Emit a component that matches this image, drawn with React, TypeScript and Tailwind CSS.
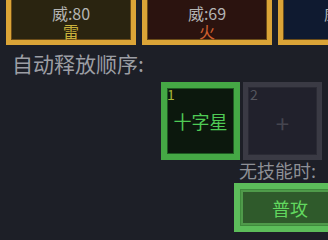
import React from "react";

const font = { fontFamily: '"Noto Sans CJK SC", "Noto Sans", sans-serif' };

function Card({ power, label, bg, labelColor }: { power: string; label: string; bg: string; labelColor: string }) {
  return (
    <div className={`w-[130px] h-[61px] shrink-0 border-[5px] border-[#dba437] ${bg} shadow-[inset_0_0_0_1px_#6b4c18] flex flex-col items-center pt-[15px]`}>
      <div className="text-[16px] leading-[19px] text-[#b4b4b4] whitespace-nowrap">{power}</div>
      <div className={`text-[16px] leading-[17px] ${labelColor}`}>{label}</div>
    </div>
  );
}

export default function App() {
  return (
    <div className="w-[328px] h-[240px] overflow-hidden bg-[#1d1f27] relative" style={font}>
      <div className="flex gap-[6px] ml-[6px] mt-[-16px]">
        <Card power="威:80" label="雷" bg="bg-[#2a2410]" labelColor="text-[#c9b23c]" />
        <Card power="威:69" label="火" bg="bg-[#2b130f]" labelColor="text-[#d0602e]" />
        <Card power="威:80" label="水" bg="bg-[#0f1a30]" labelColor="text-[#4a8ad0]" />
      </div>
      <div className="ml-[12px] mt-[4px] text-[21px] leading-[28px] text-[#9c9ea4]">自动释放顺序:</div>
      <div className="flex gap-[3px] ml-[161px] mt-[5px]">
        <div className="relative w-[79px] h-[78px] border-[6px] border-[#45a845] bg-[#0c180d] shadow-[inset_0_0_0_1px_#1f5a22] flex items-center justify-center">
          <span className="absolute left-[0px] top-[-2px] text-[14px] leading-[16px] text-[#a8b63a]">1</span>
          <span className="text-[18px] leading-[22px] text-[#4fcb55]">十字星</span>
        </div>
        <div className="relative w-[79px] h-[78px] border-[5px] border-[#3a3a44] bg-[#21212c] shadow-[inset_0_0_0_1px_#2a2a34] flex items-center justify-center">
          <span className="absolute left-[2px] top-[-1px] text-[14px] leading-[16px] text-[#55555e]">2</span>
          <span className="text-[24px] leading-[24px] text-[#45454f] mt-[4px]">+</span>
        </div>
      </div>
      <div className="ml-[239px] mt-[-1px] text-[18px] leading-[22px] text-[#8e9096]">无技能时:</div>
      <div className="ml-[234px] mt-[2px] w-[110px] h-[49px] border-[6px] border-[#5cbd5a] bg-[#2f5a2b] shadow-[inset_0_0_0_1px_#3f8a3c,inset_0_0_0_3px_#4f9a4a] flex items-center pl-[32px]">
        <span className="text-[18px] leading-[22px] text-[#62d85f]">普攻</span>
      </div>
    </div>
  );
}
